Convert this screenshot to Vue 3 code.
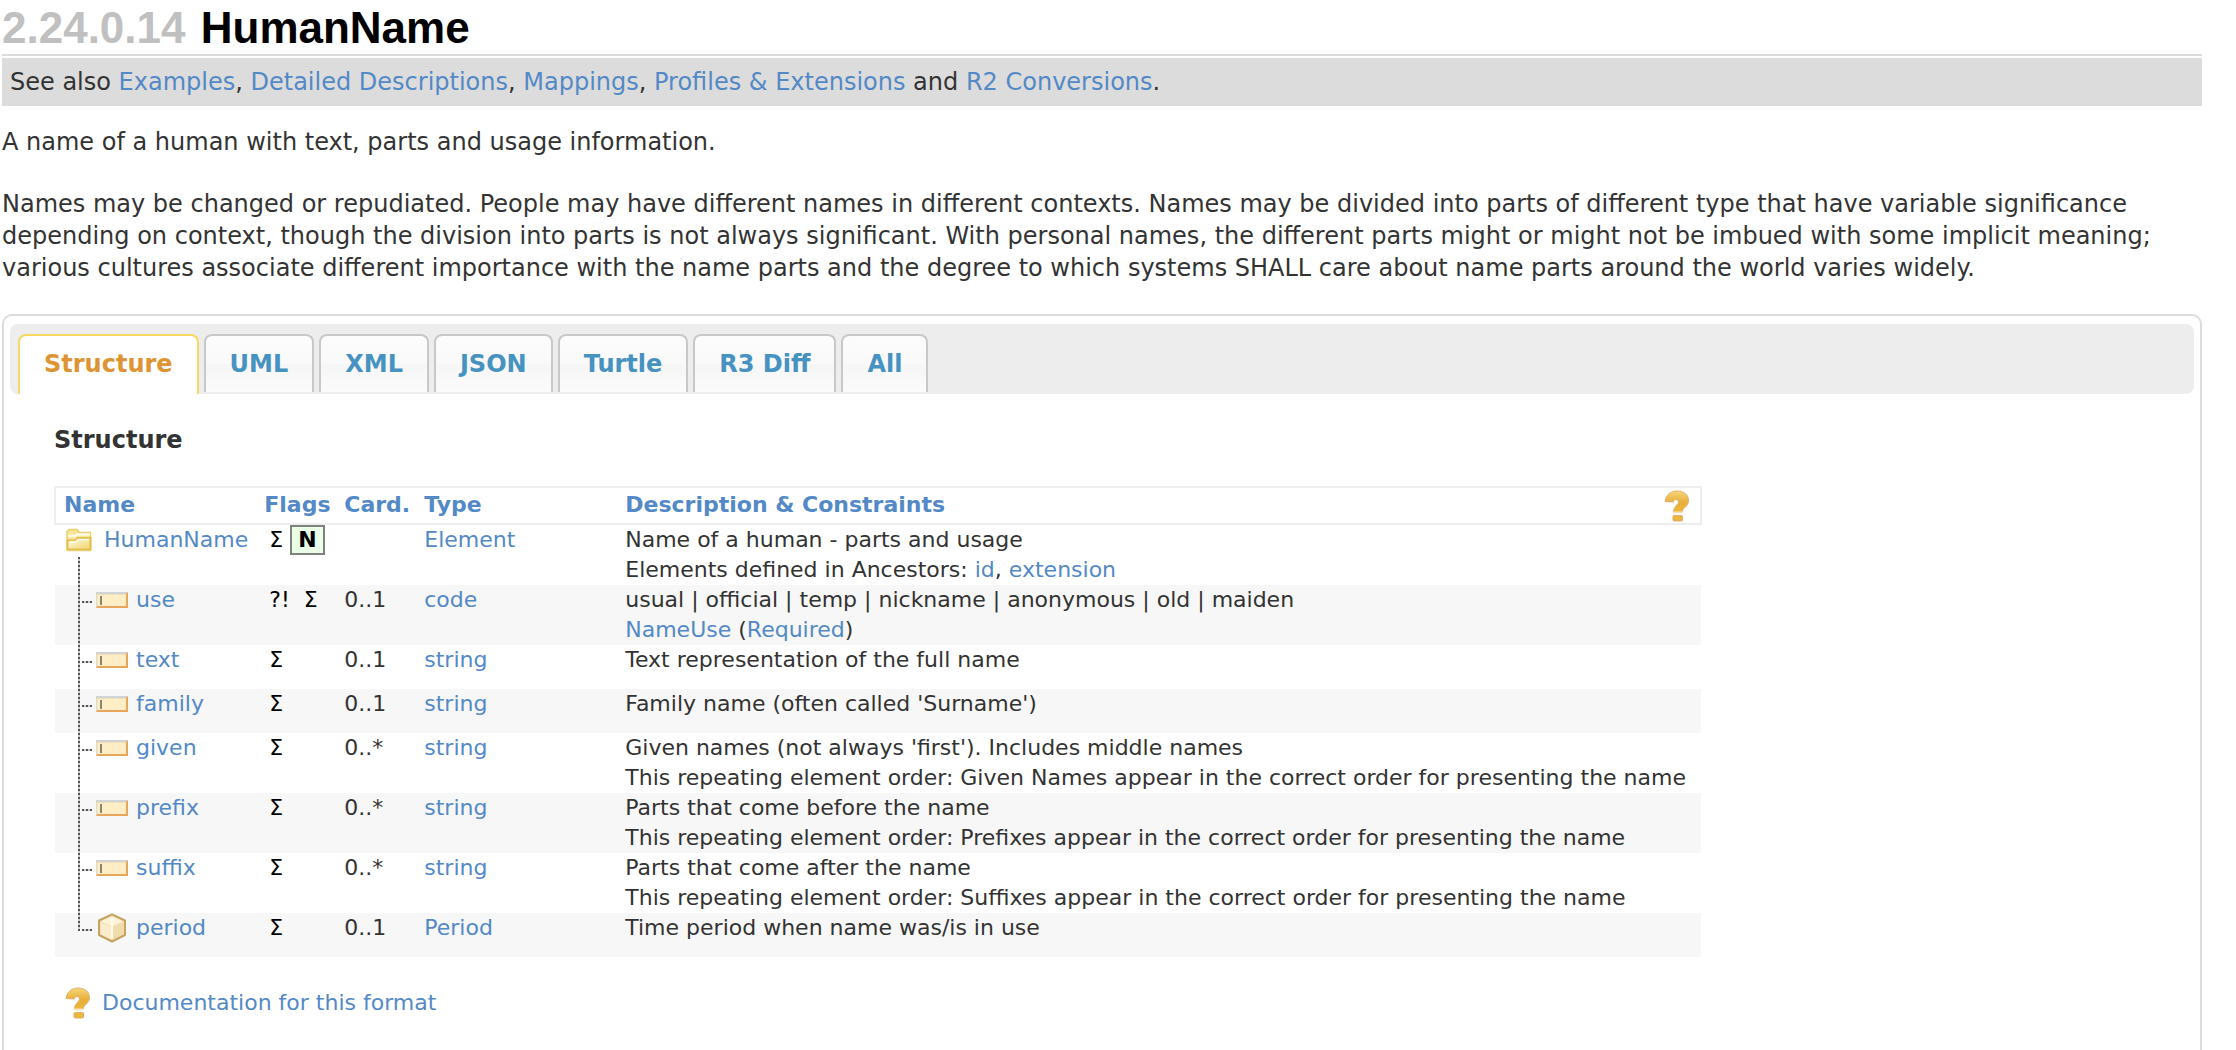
<script setup>
const seeAlso = [
  { label: 'Examples', after: ', ' },
  { label: 'Detailed Descriptions', after: ', ' },
  { label: 'Mappings', after: ', ' },
  { label: 'Profiles & Extensions', after: ' and ' },
  { label: 'R2 Conversions', after: '.' },
]

const tabs = ['Structure', 'UML', 'XML', 'JSON', 'Turtle', 'R3 Diff', 'All']

const rows = [
  { name: 'use', flags: '?!\u00a0\u00a0Σ', card: '0..1', type: 'code', lines: ['usual | official | temp | nickname | anonymous | old | maiden'], binding: true },
  { name: 'text', flags: 'Σ', card: '0..1', type: 'string', lines: ['Text representation of the full name'] },
  { name: 'family', flags: 'Σ', card: '0..1', type: 'string', lines: ["Family name (often called 'Surname')"] },
  { name: 'given', flags: 'Σ', card: '0..*', type: 'string', lines: ["Given names (not always 'first'). Includes middle names", 'This repeating element order: Given Names appear in the correct order for presenting the name'] },
  { name: 'prefix', flags: 'Σ', card: '0..*', type: 'string', lines: ['Parts that come before the name', 'This repeating element order: Prefixes appear in the correct order for presenting the name'] },
  { name: 'suffix', flags: 'Σ', card: '0..*', type: 'string', lines: ['Parts that come after the name', 'This repeating element order: Suffixes appear in the correct order for presenting the name'] },
  { name: 'period', flags: 'Σ', card: '0..1', type: 'Period', lines: ['Time period when name was/is in use'], complex: true },
]
</script>

<template>
  <main class="page">
    <svg class="defs" aria-hidden="true">
      <defs>
        <linearGradient id="gold" x1="0" y1="0" x2="0" y2="1">
          <stop offset="0" stop-color="#f6d77a" />
          <stop offset="0.55" stop-color="#e8ae38" />
          <stop offset="1" stop-color="#eeb83a" />
        </linearGradient>
        <linearGradient id="paper" x1="0" y1="0" x2="1" y2="1">
          <stop offset="0" stop-color="#fffbe4" />
          <stop offset="1" stop-color="#f2d56a" />
        </linearGradient>
        <symbol id="help" viewBox="0 0 26 32">
          <path d="M1 11.500C2 4.500 7 1 13 1c7 0 11.500 4 11.500 9.500 0 6-6.500 7.500-6.500 12H9.500c-.500-6 5-7.500 5-10.500 0-1.600-1-2.500-2.500-2.500-1.700 0-2.500 1-2.700 2.500z" fill="url(#gold)" stroke="#dfb070" stroke-width="1" />
          <path d="M9 22.500h9" stroke="#f5e2bf" stroke-width="2" />
          <rect x="9" y="25.500" width="9.500" height="5.500" rx="1" fill="#ecb53c" stroke="#dfb070" />
        </symbol>
      </defs>
    </svg>

    <h1><span class="number">2.24.0.14</span> HumanName</h1>
    <p class="see-also">See also <template v-for="item in seeAlso" :key="item.label"><a href="#">{{ item.label }}</a>{{ item.after }}</template></p>

    <p class="intro">A name of a human with text, parts and usage information.</p>
    <p class="intro">Names may be changed or repudiated. People may have different names in different contexts. Names may be divided into parts of different type that have variable significance depending on context, though the division into parts is not always significant. With personal names, the different parts might or might not be imbued with some implicit meaning; various cultures associate different importance with the name parts and the degree to which systems SHALL care about name parts around the world varies widely.</p>

    <section class="panel">
      <nav class="tabs">
        <a v-for="(tab, i) in tabs" :key="tab" href="#" class="tab" :class="{ active: i === 0 }">{{ tab }}</a>
      </nav>

      <div class="content">
        <h2>Structure</h2>
        <table>
          <colgroup>
            <col class="c-name" /><col class="c-flags" /><col class="c-card" /><col class="c-type" /><col class="c-desc" />
          </colgroup>
          <thead>
            <tr>
              <th><a href="#">Name</a></th>
              <th><a href="#">Flags</a></th>
              <th><a href="#">Card.</a></th>
              <th><a href="#">Type</a></th>
              <th>
                <div class="desc-head">
                  <a href="#">Description &amp; Constraints</a>
                  <a href="#" class="help-link" aria-label="Help"><svg class="help"><use href="#help" /></svg></a>
                </div>
              </th>
            </tr>
          </thead>
          <tbody>
            <tr>
              <td class="root">
                <div class="name">
                  <svg class="folder" viewBox="0 0 28 24">
                    <path d="M2 21V3.500L4 1.500h8l2 3h11.500V21z" fill="#f7e59a" stroke="#e9cf6e" stroke-width="1.500" />
                    <path d="M3 8h7l2-1.500h13" fill="none" stroke="#fffbe0" stroke-width="2.500" />
                    <path d="M2.500 12.500h8l2-2.500h13v11.500H2.500z" fill="url(#paper)" stroke="#e3bf4c" stroke-width="2" />
                    <path d="M4 14h7l2-2.500h11" fill="none" stroke="#fffdf0" stroke-width="1.500" />
                    <path d="M2 22.500h24" stroke="#e8cd6c" stroke-width="1.500" />
                  </svg>
                  <a href="#">HumanName</a>
                </div>
              </td>
              <td class="flags">Σ <a href="#" class="normative">N</a></td>
              <td></td>
              <td><a href="#">Element</a></td>
              <td>Name of a human - parts and usage<br />Elements defined in Ancestors: <a href="#">id</a>, <a href="#">extension</a></td>
            </tr>
            <tr v-for="row in rows" :key="row.name">
              <td class="branch" :class="{ last: row.complex }">
                <div class="name child">
                  <svg v-if="row.complex" class="cube" viewBox="0 0 32 30">
                    <path d="M16 1.500l13 6v14.500l-13 6.500L3 22V7.500z" fill="#f3dfae" stroke="#c6a360" stroke-width="2" stroke-linejoin="round" />
                    <path d="M16 3l11 5.200-11 5.300L5 8.200z" fill="#fdf3d8" />
                    <path d="M4.500 9.500L15.500 14v12.500L4.500 21z" fill="#fbeccb" />
                    <path d="M27.500 9.500L17 14v12.500l10.500-5.500z" fill="#f0dcaa" />
                    <path d="M16 4v22" stroke="#fff8e6" stroke-width="2" />
                  </svg>
                  <svg v-else class="field" viewBox="0 0 32 16">
                    <rect width="32" height="16" fill="#e9a55a" />
                    <path d="M0 0h32l-2 2H2v12l-2 2z" fill="#d3d3d3" />
                    <rect x="1" y="2" width="29" height="12" fill="#fdeec5" />
                    <path d="M1 14V2.500h29" fill="none" stroke="#efe0bc" />
                    <rect x="4" y="4" width="2" height="9" fill="#8b8674" />
                  </svg>
                  <a href="#">{{ row.name }}</a>
                </div>
              </td>
              <td class="flags">{{ row.flags }}</td>
              <td>{{ row.card }}</td>
              <td><a href="#">{{ row.type }}</a></td>
              <td>
                <div v-for="line in row.lines" :key="line">{{ line }}</div>
                <div v-if="row.binding"><a href="#">NameUse</a> (<a href="#">Required</a>)</div>
              </td>
            </tr>
          </tbody>
        </table>
        <p class="docs"><a href="#"><svg class="help" aria-hidden="true"><use href="#help" /></svg>Documentation for this format</a></p>
      </div>
    </section>
  </main>
</template>

<style>
body {
  margin: 0;
  background: #fff;
}
</style>

<style scoped>
.page {
  box-sizing: border-box;
  display: flex;
  flex-direction: column;
  min-height: 100vh;
  padding: 0 34px 0 2px;
  color: #333;
  font: 24px/32px Verdana, "DejaVu Sans", sans-serif;
}
.defs {
  position: absolute;
  width: 0;
  height: 0;
}
a {
  color: #5389c6;
  text-decoration: none;
}
h1 {
  margin: 0 0 2px;
  padding: 4px 0 2px;
  border-bottom: 2px solid #dcdcdc;
  color: #000;
  font: bold 44px/48px "Liberation Sans", Arial, sans-serif;
}
.number {
  margin-right: 3px;
  color: #c0c0c0;
}
.see-also {
  margin: 0 0 20px;
  padding: 8px;
  background: #dcdcdc;
}
.intro {
  margin: 0 0 30px;
}
.panel {
  flex: 1;
  padding: 8px 6px;
  border: 2px solid #dcdcdc;
  border-bottom: 0;
  border-radius: 10px 10px 0 0;
}
.tabs {
  display: flex;
  gap: 5px;
  padding: 10px 8px 0;
  border-radius: 8px;
  background: #ededed;
}
.tab {
  margin-bottom: 2px;
  padding: 12px 24px;
  border: 2px solid #c8c8c8;
  border-bottom: 0;
  border-radius: 8px 8px 0 0;
  background: linear-gradient(#fcfcfc, #f9f9f9 50%, #f6f6f6 51%, #fbfbfb);
  color: #4692c1;
  font-weight: bold;
}
.tab.active {
  margin-bottom: 0;
  padding-bottom: 14px;
  border-color: #f6d862;
  background: #fff;
  color: #df9434;
}
.content {
  padding: 30px 44px 20px;
}
h2 {
  margin: 0 0 30px;
  font-size: 24px;
  line-height: 32px;
}
table {
  border-collapse: collapse;
  font-size: 22px;
  line-height: 30px;
  white-space: nowrap;
}
.c-name { width: 201px; }
.c-flags { width: 80px; }
.c-card { width: 80px; }
.c-type { width: 201px; }
.c-desc { width: 1084px; }
thead tr {
  border: 2px solid #eee;
}
th,
td {
  padding: 0 8px;
  text-align: left;
  vertical-align: top;
}
th {
  padding: 2px 0 0 8px;
}
td {
  height: 44px;
}
tbody tr:nth-child(even) {
  background: #f7f7f7;
}
.desc-head {
  display: flex;
  justify-content: space-between;
  height: 33px;
}
.help-link {
  display: flex;
  padding: 0 10px 0 4px;
}
.help {
  width: 26px;
  height: 32px;
}
.name {
  display: flex;
  align-items: center;
  height: 30px;
}
.folder {
  width: 28px;
  height: 24px;
  margin: 0 11px 0 2px;
}
.child {
  padding-left: 33px;
}
.child svg {
  width: 32px;
  margin-right: 8px;
}
.field {
  height: 16px;
}
.cube {
  height: 30px;
}
/* dotted tree lines: one vertical strip, plus a short stub for each child */
.root {
  background: repeating-linear-gradient(#555 0 2px, #ccc 2px 4px) 23px 32px / 2px 100% no-repeat;
}
.branch {
  background:
    repeating-linear-gradient(#555 0 2px, #ccc 2px 4px) 23px 0 / 2px 100% no-repeat,
    repeating-linear-gradient(90deg, #555 0 2px, #ccc 2px 4px) 27px 16px / 10px 2px no-repeat;
}
.branch.last {
  background-size: 2px 18px, 10px 2px;
}
td.flags {
  padding-left: 13px;
  padding-right: 0;
  color: #000;
}
.normative {
  display: inline-block;
  box-sizing: border-box;
  height: 30px;
  padding: 0 6px;
  border: 2px solid #808080;
  background: #e9ffe6;
  color: #000;
  font-weight: bold;
  line-height: 26px;
  vertical-align: top;
}
.docs {
  margin: 30px 0 0 11px;
  font-size: 22px;
}
.docs a {
  display: inline-flex;
  gap: 11px;
}
</style>
